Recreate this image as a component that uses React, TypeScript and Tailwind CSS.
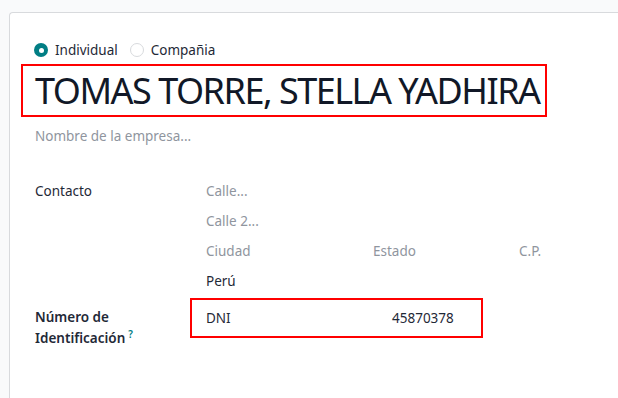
import React from 'react';

const FONT = { fontFamily: '"Noto Sans", "Open Sans", sans-serif' };

function Radio({ checked, label }: { checked: boolean; label: string }) {
  return (
    <label className="flex items-center gap-[7px]">
      {checked ? (
        <span className="w-[14px] h-[14px] rounded-full bg-[#017e84] flex items-center justify-center">
          <span className="w-[5px] h-[5px] rounded-full bg-white" />
        </span>
      ) : (
        <span className="w-[14px] h-[14px] rounded-full border border-[#d8dadd] bg-white" />
      )}
      <span className="text-[13.5px] text-[#1f2937]">{label}</span>
    </label>
  );
}

export default function App() {
  return (
    <div style={FONT} className="w-[618px] h-[398px] overflow-hidden bg-[#f9fafb] pt-[12px] pl-[9px]">
      <div className="h-full bg-white border-l border-t border-[#d8dadd] rounded-tl-[4px] pl-[25px] pt-[27px]">

        {/* company type */}
        <div className="flex items-center gap-[12px] h-[20px] ml-[-1px]">
          <Radio checked label="Individual" />
          <Radio checked={false} label="Compañia" />
        </div>

        {/* name */}
        <div className="mt-[4px] ml-[-14px] w-[526px] h-[53px] border-2 border-[#ff0000] flex items-center pl-[12px]">
          <h1 className="text-[36px] leading-none tracking-[-1.5px] text-[#111827] whitespace-nowrap">
            TOMAS TORRE, STELLA YADHIRA
          </h1>
        </div>

        <div className="mt-[9px] h-[20px] flex items-center text-[13.5px] text-[#8f959e]">
          Nombre de la empresa...
        </div>

        {/* address */}
        <div className="mt-[30px] flex text-[13.5px]">
          <div className="w-[171px] h-[30px] flex items-center text-[#1f2937]">Contacto</div>
          <div className="flex flex-col text-[#8f959e]">
            <div className="h-[30px] flex items-center">Calle...</div>
            <div className="h-[30px] flex items-center">Calle 2...</div>
            <div className="h-[30px] flex items-center">
              <span className="w-[167px]">Ciudad</span>
              <span className="w-[146px]">Estado</span>
              <span>C.P.</span>
            </div>
            <div className="h-[30px] flex items-center text-[#1f2937]">Perú</div>
          </div>
        </div>

        {/* identification */}
        <div className="mt-[2px] flex text-[13.5px]">
          <div className="w-[155px] pt-[9px] leading-[21px] font-semibold text-[#1f2937]">
            <div>Número de</div>
            <div>
              Identificación
              <sup className="ml-[3px] text-[10px] font-semibold text-[#017e84]">?</sup>
            </div>
          </div>
          <div className="w-[293px] h-[40px] border-2 border-[#ff0000] flex items-center pl-[14px] text-[#1f2937]">
            <span className="w-[186px]">DNI</span>
            <span>45870378</span>
          </div>
        </div>

      </div>
    </div>
  );
}
